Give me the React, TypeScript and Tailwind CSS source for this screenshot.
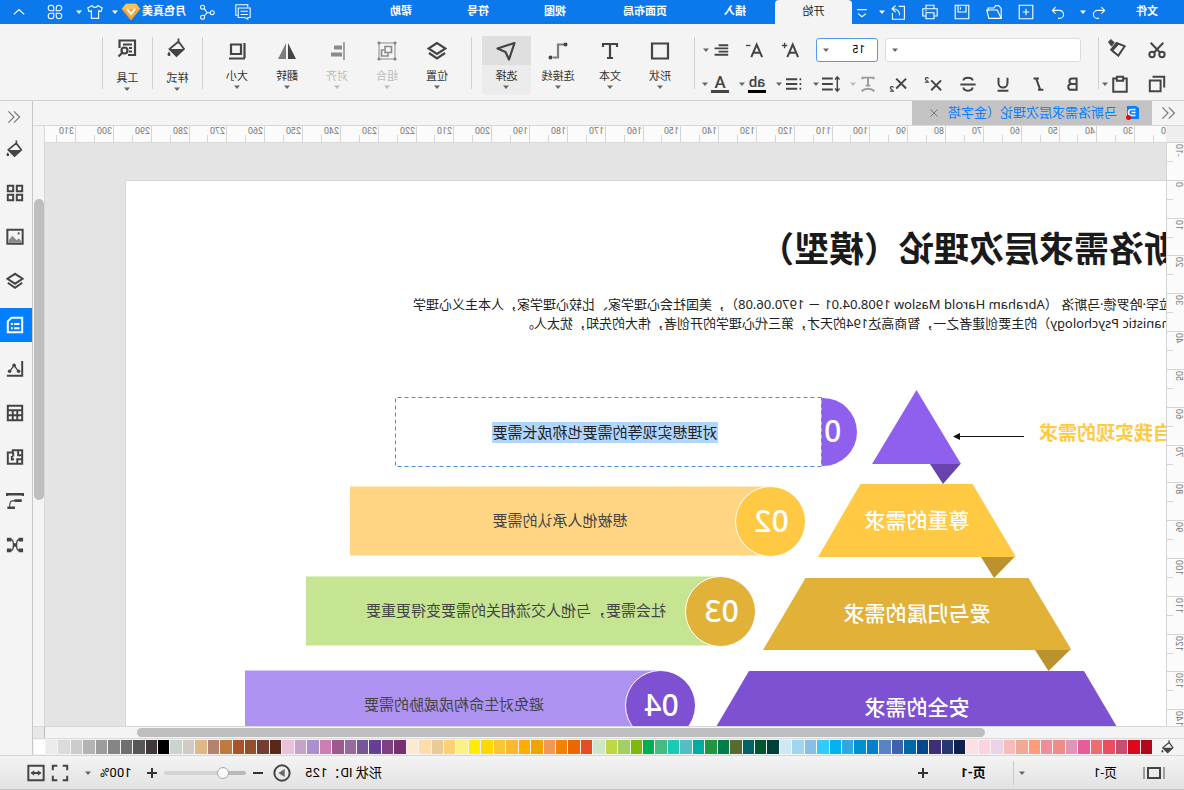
import React from 'react';

type IconProps = { children: React.ReactNode; size?: 'sm' | 'md' | 'lg' };

const ICON_SIZES = { sm: 'w-4 h-4', md: 'w-[18px] h-[18px]', lg: 'w-5 h-5' };
const ICON_STROKES = { sm: 2.4, md: 2.2, lg: 2.2 };

function Icon({ children, size = 'md' }: IconProps) {
  return (
    <svg
      viewBox="0 0 20 20"
      fill="none"
      stroke="currentColor"
      strokeWidth={ICON_STROKES[size]}
      aria-hidden="true"
      className={`${ICON_SIZES[size]} shrink-0`}
    >
      {children}
    </svg>
  );
}

function Caret({ className = 'text-[#666]' }: { className?: string }) {
  return (
    <svg viewBox="0 0 8 8" fill="currentColor" aria-hidden="true" className={`w-2 h-2 shrink-0 ${className}`}>
      <path d="M1 2.500h6L4 6z" />
    </svg>
  );
}

/* ── Shared glyphs ── */

const bucket = (
  <>
    <path d="M8.500 0.500v5M8.500 3.500l9 7.500-7 7L3 11l5.500-7.500" strokeWidth="1.800" />
    <path d="M3 11h14.500l-7 7.500z" fill="currentColor" stroke="none" />
    <path d="M18 13.500c1 1.500 1.500 2.200 1.500 3a1.500 1.500 0 0 1-3 0c0-.8.5-1.500 1.500-3z" fill="currentColor" stroke="none" />
  </>
);

const layers = (
  <>
    <path d="M10 2l8.500 5.500L10 13 1.500 7.500z" />
    <path d="M2 12l8 5.500 8-5.500" />
  </>
);

/* ── Title bar ── */

const menuTabs = [
  { label: '插入', width: 'w-20' },
  { label: '页面布局', width: 'w-[100px]' },
  { label: '视图', width: 'w-20' },
  { label: '符号', width: 'w-[74px]' },
  { label: '帮助', width: 'w-20' },
];

const fileActions = [
  { label: '重做', art: <path d="M13 4l4 4-4 4M17 8H8a5 5 0 0 0 0 10h2" /> },
  { label: '新建', art: <path d="M1.500 1.500h17v17h-17zM10 6v8M6 10h8" /> },
  { label: '打开', art: <path d="M1 18V5.500L4 2h4l2 3h7.500v4M1 18h15.500L19 7.500H6z" /> },
  { label: '保存', art: <path d="M1.500 1.500h17v17h-17zM5 2v8h10V2M12 4v3" /> },
  { label: '打印', art: <path d="M5 6V1.500h10V6M5 15H1V6h18v9h-4M5 11h10v7.500H5zM14 8.500h2" /> },
];

function TitleBar() {
  return (
    <header className="flex h-6 shrink-0 items-center bg-[#0b78ec] text-[11px] text-white">
      <button className="w-[74px] font-bold">文件</button>
      <button aria-label="撤销" className="flex w-[31px] items-center justify-end gap-1">
        <Icon size="sm">
          <path d="M7 4L3 8l4 4M3 8h9a5 5 0 0 1 0 10h-2" strokeWidth="1.400" />
        </Icon>
        <Caret className="text-white" />
      </button>
      <div className="ml-[5px] flex">
        {fileActions.map(a => (
          <button key={a.label} aria-label={a.label} className="flex w-8 justify-center">
            <Icon size="sm">
              <g strokeWidth="1.400">{a.art}</g>
            </Icon>
          </button>
        ))}
      </div>
      <button aria-label="导出" className="flex items-center gap-1 pl-2">
        <Icon size="sm">
          <path d="M9 3H2v16h15v-8M8 14c0-6 3-8 9-8M13 2l4.500 4-4.500 4" strokeWidth="1.400" />
        </Icon>
        <Caret className="text-white" />
      </button>
      <button aria-label="更多" className="ml-[6px] flex w-5 justify-center">
        <Icon size="sm">
          <path d="M4 7h12M5 12l5 4 5-4" strokeWidth="1.400" />
        </Icon>
      </button>
      <nav className="flex h-full">
        <button className="w-[77px] rounded-t-sm bg-[#f4f4f4] text-[#222]">开始</button>
        {menuTabs.map(t => (
          <button key={t.label} className={`${t.width} font-bold`}>{t.label}</button>
        ))}
      </nav>
      <div className="mr-[3px] ml-auto flex items-center">
        <button aria-label="消息" className="mr-3 flex w-6 justify-center">
          <Icon size="sm">
            <path d="M1 5h15v12H8l-4 2v-2H1zM4 4V1h15v13h-2M4 9h9M4 13h9" strokeWidth="1.300" />
          </Icon>
        </button>
        <button aria-label="分享" className="mr-[9px] flex w-6 justify-center">
          <Icon size="sm">
            <g strokeWidth="1.300">
              <circle cx="3.500" cy="11" r="2.500" />
              <circle cx="15.500" cy="4" r="2.500" />
              <circle cx="15.500" cy="16.500" r="2.500" />
              <path d="M6 11h4l3.500-5.500M10 11l3.500 4" />
            </g>
          </Icon>
        </button>
        <button className="flex items-center">
          <span className="font-bold">月色真美</span>
          <svg viewBox="0 0 20 18" aria-hidden="true" className="mr-0.5 ml-px h-[18px] w-5">
            <path d="M5 1h10l4 5-9 11L1 6z" fill="#f5a93b" stroke="#e89a30" />
            <path d="M5 1h10l4 5H1z" fill="#fbc15c" />
            <path d="M6 6l4 5 4-5" fill="none" stroke="#fff" strokeWidth="2" />
          </svg>
          <Caret className="text-white" />
        </button>
        <button aria-label="皮肤" className="ml-2 flex items-center gap-1">
          <Icon size="sm">
            <path d="M6.500 2c1 3 6 3 7 0L19 5l-1.500 4.500-3-1V18h-9V8.500l-3 1L1 5z" strokeWidth="1.400" />
          </Icon>
          <Caret className="text-white" />
        </button>
        <button aria-label="应用" className="ml-2 flex w-6 justify-center">
          <Icon size="sm">
            <path
              d="M8.500 8.500H5A3.500 3.500 0 1 1 8.500 5zM11.500 8.500V5A3.500 3.500 0 1 1 15 8.500zM8.500 11.500V15A3.500 3.500 0 1 1 5 11.500zM11.500 11.500H15a3.500 3.500 0 1 1-3.500 3.500z"
              strokeWidth="1.300"
            />
          </Icon>
        </button>
        <button aria-label="收起" className="ml-2 flex w-8 justify-center">
          <Icon size="sm">
            <path d="M3.500 13L10 7l6.500 6" strokeWidth="1.500" />
          </Icon>
        </button>
      </div>
    </header>
  );
}

/* ── Ribbon ── */

function Divider({ className = '' }: { className?: string }) {
  return <div className={`mt-px h-[52px] w-px shrink-0 bg-[#d0d0d0] ${className}`} />;
}

function DropButton({ label, children, dim = false }: { label: string; children: React.ReactNode; dim?: boolean }) {
  return (
    <button aria-label={label} className={`flex w-[29px] items-center gap-px ${dim ? 'text-[#999]' : ''}`}>
      <span className="flex w-5 justify-center">{children}</span>
      <Caret className={dim ? 'text-[#bbb]' : 'text-[#666]'} />
    </button>
  );
}

type BigProps = { label: string; icon: React.ReactNode; width?: string; dim?: boolean; active?: boolean; low?: boolean };

function BigButton({ label, icon, width = 'w-[50px]', dim, active, low }: BigProps) {
  return (
    <button
      className={`flex h-[59px] shrink-0 flex-col items-center rounded-sm text-[11px] ${width} ${dim ? 'text-[#bbb]' : 'text-[#333]'} ${active ? 'bg-[#ececec]' : ''}`}
    >
      <span
        className={`flex w-full items-center justify-center ${low ? 'h-6' : 'h-[29px]'} ${dim ? 'text-[#8a8a8a]' : 'text-[#444]'} ${active ? 'bg-[#dfdfdf]' : ''}`}
      >
        <Icon size="lg">{icon}</Icon>
      </span>
      <span className={`leading-3 ${low ? 'mt-[13px]' : 'mt-[6px]'}`}>{label}</span>
      <Caret className={dim ? 'text-[#bbb]' : 'text-[#666]'} />
    </button>
  );
}

const formatButtons = [
  { label: '加粗', art: <path d="M6 4h5a3 3 0 0 1 0 6H6zM6 10h6a3 3 0 0 1 0 6.500H6z" /> },
  { label: '倾斜', art: <path d="M9 4h6M4 16.500h6M12 4L7.500 16.500" /> },
  { label: '下划线', art: <path d="M5 3v6a5 5 0 0 0 10 0V3M4 17.500h12" /> },
  { label: '删除线', art: <path d="M15 6c0-4-10-4-10 0M1.500 10.500h17M5 14c0 4.500 10 4.500 10 0" /> },
  {
    label: '上标',
    art: (
      <>
        <path d="M1 6l11 11M12 6L1 17" />
        <path d="M15 4c1-2 4-1 3.500.5 0 1-3.500 2.500-3.500 3.500h4" strokeWidth="1.300" />
      </>
    ),
  },
  {
    label: '下标',
    art: (
      <>
        <path d="M1 4l11 11M12 4L1 15" />
        <path d="M15 14c1-2 4-1 3.500.5 0 1-3.500 2.500-3.500 3.500h4" strokeWidth="1.300" />
      </>
    ),
  },
];

const insertTools = [
  { label: '形状', icon: <path d="M2 2.500h16v15H2z" /> },
  { label: '文本', icon: <path d="M3 6V3h14v3M10 3v14M7 17h6" /> },
];

const arrangeTools = [
  { label: '位置', icon: layers, dim: false },
  {
    label: '组合',
    icon: (
      <>
        <path d="M2 2h16v16H2z" strokeWidth="1" />
        <path d="M1 1h2v2H1zM17 1h2v2h-2zM1 17h2v2H1zM17 17h2v2h-2z" fill="currentColor" strokeWidth="1" />
        <path d="M5.500 5.500h6.500v6H5.500zM13 9h2.500v6H9v-2.500" strokeWidth="1.600" />
      </>
    ),
    dim: true,
  },
  {
    label: '对齐',
    icon: (
      <>
        <path d="M3 1v18" strokeWidth="1.500" />
        <path d="M5 4.500h8v4H5zM5 11.500h11v4H5z" fill="currentColor" stroke="none" />
      </>
    ),
    dim: true,
  },
  {
    label: '翻转',
    icon: (
      <>
        <path d="M9 2v16H1z" fill="currentColor" stroke="none" />
        <path d="M11 2v16h8z" fill="#7d7d7d" stroke="none" />
      </>
    ),
    dim: false,
  },
  { label: '大小', icon: <path d="M6 3.500h10v9.500H6zM2.500 2v15M2 17.500h16" />, dim: false },
];

function Ribbon() {
  return (
    <div className="flex h-[77px] shrink-0 items-start border-b border-[#d0d0d0] bg-[#f4f4f4] pt-3 text-[#444]">
      {/* Clipboard */}
      <div className="mt-px flex w-[85px] shrink-0 flex-col gap-2">
        <div className="flex h-[26px] items-center gap-4 pl-[15px]">
          <button aria-label="剪切" className="flex w-6 justify-center">
            <Icon>
              <circle cx="4.500" cy="15" r="3" />
              <circle cx="15.500" cy="15" r="3" />
              <path d="M3 2l10.500 11M17 2L6.500 13" />
            </Icon>
          </button>
          <button aria-label="格式刷" className="mb-1 flex w-6 justify-center">
            <Icon>
              <path d="M1.500 8l9-3.500 6 7.500-8 6.500z" />
              <path d="M13 4l4-3.500 2.500 3L16 8z" fill="currentColor" strokeWidth="1" />
              <path d="M9 5l7 8" strokeWidth="3" />
            </Icon>
          </button>
        </div>
        <div className="flex h-[26px] items-center gap-[15px] pl-[15px]">
          <button aria-label="复制" className="flex w-6 justify-center">
            <Icon>
              <path d="M2 14V2h13M6 6h12v12H6z" />
            </Icon>
          </button>
          <DropButton label="粘贴">
            <Icon>
              <path d="M6 4H2.500v14.500h15V4H14" />
              <path d="M6.500 2h7v4.500h-7z" />
            </Icon>
          </DropButton>
        </div>
      </div>
      <Divider />

      {/* Font */}
      <div className="mt-px flex w-[403px] shrink-0 flex-col gap-2">
        <div className="flex h-[26px] items-center pl-[17px]">
          <label className="relative flex items-center">
            <select aria-label="字体" className="h-6 w-[196px] appearance-none rounded-[3px] border border-[#dcdcdc] bg-white">
              <option> </option>
            </select>
            <Caret className="absolute right-[6px] text-[#666]" />
          </label>
          <label className="relative ml-[7px] flex items-center">
            <select aria-label="字号" className="h-6 w-[62px] appearance-none rounded-[3px] border border-[#4f9bef] bg-white pl-3 text-[11px] text-black">
              <option>15</option>
            </select>
            <Caret className="absolute right-[6px] text-[#666]" />
          </label>
          <button aria-label="增大字号" className="ml-2 flex w-9 justify-center">
            <Icon>
              <path d="M1 18L7 4l6 14M3 13h8" />
              <path d="M13 5h6M16 2v6" strokeWidth="1.500" />
            </Icon>
          </button>
          <button aria-label="减小字号" className="mr-[5px] flex w-9 justify-center">
            <Icon>
              <path d="M1 18L7 4l6 14M3 13h8" />
              <path d="M14 5h5" strokeWidth="1.500" />
            </Icon>
          </button>
          <DropButton label="对齐方式">
            <Icon size="sm">
              <path d="M1 4h12M1 8h17M1 12h12M1 16h17" />
            </Icon>
          </DropButton>
        </div>
        <div className="flex h-[26px] items-center pl-[7px]">
          {formatButtons.map(b => (
            <button key={b.label} aria-label={b.label} className="flex w-[35px] justify-center">
              <Icon>{b.art}</Icon>
            </button>
          ))}
          <div className="flex gap-2 pl-[3px]">
            <DropButton label="文字效果" dim>
              <Icon size="sm">
                <path d="M3 4V2h14v2M10 2v10M7 12h6M2 19c4-4 12-4 16 0" />
              </Icon>
            </DropButton>
            <DropButton label="行距">
              <Icon>
                <path d="M8 4h12M8 10h12M8 16h12" />
                <path d="M3 2v16M.5 5L3 2l2.500 3M.5 15L3 18l2.500-3" strokeWidth="1.600" />
              </Icon>
            </DropButton>
            <DropButton label="项目符号">
              <Icon size="sm">
                <path d="M6 4h14M6 10h14M6 16h14" />
                <path d="M1 4h2M1 10h2M1 16h2" />
              </Icon>
            </DropButton>
            <DropButton label="突出显示">
              <span className="block w-[18px] border-b-[3px] border-black text-center text-[15px] leading-[15px] font-medium">ab</span>
            </DropButton>
            <DropButton label="字体颜色">
              <span className="block w-[18px] border-b-[3px] border-[#444] text-center text-[17px] leading-[15px] font-medium">A</span>
            </DropButton>
          </div>
        </div>
      </div>
      <Divider className="mr-[9px]" />

      {insertTools.map(t => (
        <BigButton key={t.label} label={t.label} icon={t.icon} />
      ))}
      <BigButton
        label="连接线"
        width="w-[54px]"
        icon={
          <>
            <path d="M3 3.500h7v13h5" stroke="#7d7d7d" />
            <circle cx="2.500" cy="3.500" r="2" fill="currentColor" stroke="none" />
            <circle cx="17.500" cy="16.500" r="2" fill="currentColor" stroke="none" />
          </>
        }
      />
      <BigButton label="选择" width="w-[49px]" active icon={<path d="M1.500 2l17 5.500-8 3.500-3.500 7.500z" strokeLinejoin="round" />} />
      <Divider className="mr-[9px] ml-[10px]" />

      {arrangeTools.map(t => (
        <BigButton key={t.label} label={t.label} icon={t.icon} dim={t.dim} />
      ))}
      <Divider className="ml-[9px]" />
      <BigButton label="样式" width="w-[49px]" low icon={bucket} />
      <Divider />
      <BigButton
        label="工具"
        width="w-[49px]"
        low
        icon={
          <>
            <path d="M9 17H2V2.500h15.500V10M5 6.500h9M5 10h3M5 13.500h3" />
            <circle cx="12.500" cy="12.500" r="3" />
            <path d="M14.500 14.500l4 4" />
          </>
        }
      />
      <Divider />
    </div>
  );
}

/* ── Document tab ── */

function DocumentTabs() {
  return (
    <div className="flex h-[25px] shrink-0 border-b border-[#d8d8d8] bg-[#f4f4f4]">
      <button aria-label="展开" className="flex w-8 items-center justify-center text-[#777]">
        <Icon size="sm">
          <path d="M9 3l-7 7 7 7M17 3l-7 7 7 7" strokeWidth="1.500" />
        </Icon>
      </button>
      <div className="flex w-60 items-center bg-[#c3c3c3]">
        <svg viewBox="0 0 14 16" aria-hidden="true" className="ml-3 h-4 w-[14px]">
          <path d="M1 3l3-2h9v13H1z" fill="#0a80ff" />
          <path d="M4.500 4.500h4a3 3 0 0 1 0 6h-4M4.500 7.500h4" fill="none" stroke="#fff" strokeWidth="1.500" />
          <circle cx="11.500" cy="12.500" r="2.500" fill="#f00" />
        </svg>
        <a href="#doc" className="ml-[9px] text-[13px] whitespace-nowrap text-[#0a7cff]">马斯洛需求层次理论（金字塔</a>
        <button aria-label="关闭" className="mr-[18px] ml-auto text-[#777]">
          <svg viewBox="0 0 8 8" fill="none" stroke="currentColor" className="h-2 w-2">
            <path d="M.5.5l7 7M7.500.5l-7 7" />
          </svg>
        </button>
      </div>
    </div>
  );
}

/* ── Rulers ── */

const STEP = 37.82;
const topMarks = Array.from({ length: 29 }, (_, i) => ({ value: 30 + i * 10, at: Math.round((i + 1) * STEP) - 7 }));
const sideMarks = Array.from({ length: 16 }, (_, i) => ({ value: i * 10 - 10, at: Math.round(i * STEP) }));

function TopRuler() {
  return (
    <svg className="block h-4 w-full bg-[#fbfbfb]" fill="#777" fontSize="9" aria-hidden="true">
      <path d="M12.500 9v7" stroke="#d4d4d4" />
      <text x="0" y="8">0</text>
      {topMarks.map(m => (
        <g key={m.value}>
          <path d={`M${m.at + 0.5} 0v16M${m.at + 19.5} 9v7`} stroke="#d4d4d4" />
          <text x={m.at + 2} y="8">{m.value}</text>
        </g>
      ))}
    </svg>
  );
}

function SideRuler() {
  return (
    <svg
      className="block w-[18px] flex-1 border-r border-[#d4d4d4] bg-[#fbfbfb]"
      fill="#777"
      fontSize="9"
      textAnchor="end"
      aria-hidden="true"
    >
      {sideMarks.map(m => (
        <g key={m.value}>
          <path d={`M0 ${m.at + 0.5}h18M11 ${m.at + 19.5}h7`} stroke="#d4d4d4" />
          <text transform={`translate(8 ${m.at + 2}) rotate(-90)`}>{m.value}</text>
        </g>
      ))}
    </svg>
  );
}

/* ── Diagram ── */

const levels = [
  { no: '02', cx: 413.5, cy: 521, color: '#ffc943', bar: '#ffd584', barEnd: 834, text: '想被他人承认的需要', tx: 624 },
  { no: '03', cx: 463.5, cy: 611, color: '#e1b138', bar: '#c5e592', barEnd: 878, text: '社会需要，与他人交流相关的需要变得更重要', tx: 668 },
  { no: '04', cx: 523.5, cy: 705, color: '#7d51d1', bar: '#ad92f1', barEnd: 939, text: '避免对生命构成威胁的需要', tx: 730 },
];

const tiers = [
  { points: '267.5,390 312,464 223,464', color: '#8f5fee', fold: '223.500,464 254,464 241,484', foldColor: '#6943ad', text: '', ty: 0 },
  { points: '211.5,484 323.5,484 366,557 168,557', color: '#ffc943', fold: '169.500,557 203,557 190,578', foldColor: '#bb922d', text: '尊重的需求', ty: 528 },
  { points: '155.5,578 378.5,578 421,650 112.5,650', color: '#e1b138', fold: '114,650 149,650 135.5,671', foldColor: '#bb922d', text: '爱与归属的需求', ty: 621 },
  { points: '100,671 435,671 478,744 57,744', color: '#7d51d1', fold: '', foldColor: '', text: '安全的需求', ty: 715 },
];

function Diagram() {
  return (
    <svg viewBox="18 142 1041 600" className="absolute top-0 left-0 h-[600px] w-[1041px]">
      {/* Pyramid */}
      {tiers.map(t => (
        <g key={t.points}>
          <polygon points={t.points} fill={t.color} />
          {t.fold && <polygon points={t.fold} fill={t.foldColor} />}
          {t.text && <text x="267" y={t.ty} textAnchor="middle" fontSize="21" fontWeight="500" fill="#fff">{t.text}</text>}
        </g>
      ))}
      <text x="12" y="440" fontSize="19" fontWeight="700" fill="#ffc943">自我实现的需求</text>
      <path d="M160 436.500h66" stroke="#111" />
      <path d="M231 436.500l-7-3.500v7z" fill="#111" />

      {/* Selected level */}
      <circle cx="361" cy="432" r="34" fill="#8f5fee" />
      <text x="360" y="442" textAnchor="middle" fontSize="30" fontWeight="500" fill="#fff">01</text>
      <rect x="362.500" y="397.500" width="426" height="69" fill="#fff" stroke="#4b8fdc" strokeDasharray="4 3" />
      <rect x="466" y="422" width="226" height="21" fill="#b0d5ff" />
      <text x="579" y="438" textAnchor="middle" fontSize="15" fill="#222">对理想实现等的需要也称成长需要</text>

      {levels.map(l => (
        <g key={l.no}>
          <rect x={l.cx} y={l.cy - 34.5} width={l.barEnd - l.cx} height="69" fill={l.bar} />
          <circle cx={l.cx} cy={l.cy + 0.5} r="35" fill={l.color} stroke="#fff" />
          <text x={l.cx - 1} y={l.cy + 11} textAnchor="middle" fontSize="30" fontWeight="500" fill="#fff">{l.no}</text>
          <text x={l.tx} y={l.cy + 5} textAnchor="middle" fontSize="15" fill="#444">{l.text}</text>
        </g>
      ))}
    </svg>
  );
}

function Canvas() {
  return (
    <main className="relative flex-1 overflow-hidden bg-[#e4e4e4] font-['Noto_Sans','Noto_Sans_CJK_SC',sans-serif] shadow-[inset_0_1px_0_#d8d8d8] [text-spacing-trim:space-all]">
      {/* Sheet */}
      <div className="absolute top-[38px] bottom-0 left-0 w-[1041px] border-t border-r border-[#d8d8d8] bg-white" />
      <h1 className="absolute top-[82px] -left-12 text-[35px] leading-[50px] font-bold whitespace-nowrap text-[#1a1a1a]">
        马斯洛需求层次理论（模型）
      </h1>
      <p className="absolute top-[152px] left-0 flex w-[753px] justify-end text-[13px] leading-5 whitespace-nowrap text-[#222]">
        亚伯拉罕·哈罗德·马斯洛 （Abraham Harold Maslow 1908.04.01 － 1970.06.08），美国社会心理学家、比较心理学家，人本主义心理学
      </p>
      <p className="absolute top-[171px] left-0 flex w-[645px] justify-end text-[13px] leading-5 whitespace-nowrap text-[#222]">
        （Humanistic Psychology）的主要创建者之一，智商高达194的天才，第三代心理学的开创者，伟大的先知，犹太人。
      </p>
      <Diagram />
    </main>
  );
}

/* ── Palette ── */

const palette = [
  '#b20718', '#d90a1c', '#c84d73', '#e94f62', '#ed6c72', '#e95c9b', '#e095b5', '#ee8c86', '#ef8d98', '#ff9c78',
  '#f0aa94', '#f5bdba', '#e8d3e7', '#fdd2e3', '#fde0e3', '#0f204f', '#25386f', '#3f2e78', '#06468b', '#0068a3',
  '#4062ad', '#5583c4', '#0080cd', '#008fcf', '#2ea9df', '#00b3f0', '#33caff', '#88bfe9', '#9dd6ee', '#cce9f5',
  '#00403a', '#00562f', '#006464', '#556b2f', '#007d4a', '#1f9640', '#00ada0', '#54bec4', '#1ccab4', '#46ba80',
  '#00b050', '#7fb80e', '#a4d063', '#bed742', '#cde6c7', '#e34f20', '#ea6800', '#f08300', '#f19757', '#f0a400',
  '#ffae00', '#fdb733', '#f9c831', '#ffd800', '#ffec00', '#fcf283', '#fdd173', '#e8cb96', '#ffdcaa', '#fde8d0',
  '#783072', '#7f3f84', '#663f96', '#765599', '#966a9f', '#9b598d', '#cc7eb1', '#a991d0', '#c6a3c8', '#ebc0da',
  '#5a281b', '#763c31', '#924f2a', '#a95426', '#bf7a40', '#b2846d', '#dfb885', '#d4cac5', '#c9d4cc', '#000000',
  '#403839', '#585656', '#706f6f', '#858585', '#9b9d9c', '#b2b4b3', '#cbcdcc', '#dbdbdb', '#ebebeb', '#ffffff',
];

function Palette() {
  return (
    <div className="flex h-[17px] shrink-0 items-center border-t border-[#dadada] bg-[#f4f4f4]">
      <button aria-label="填充颜色" className="flex w-8 justify-center text-[#444]">
        <svg viewBox="0 0 20 20" fill="none" stroke="currentColor" className="h-[14px] w-[14px]">{bucket}</svg>
      </button>
      <div className="flex h-[14px] flex-1 gap-px">
        {palette.map(c => (
          <button key={c} aria-label={c} className="flex-1" style={{ backgroundColor: c }} />
        ))}
      </div>
    </div>
  );
}

/* ── Side panel ── */

const panels = [
  { label: '填充', art: bucket },
  { label: '符号库', art: <path d="M2 2h6v6H2zM12 2h6v6h-6zM2 12h6v6H2zM12 12h6v6h-6z" /> },
  {
    label: '图片',
    art: (
      <>
        <path d="M1.500 2h17v15.500h-17z" />
        <path d="M3 16.500v-2l3-3 2 2 5-5 4 5v3z" fill="#8a8a8a" stroke="none" />
        <path d="M5 6h2" />
      </>
    ),
  },
  { label: '图层', art: layers },
  { label: '页面', art: <path d="M2 2h12l4 4v12H2zM5 9h6M12.500 9h2M5 13.500h6M12.500 13.500h2" />, active: true },
  {
    label: '图表',
    art: (
      <>
        <path d="M2 1v16.500h17" />
        <path d="M6 13l5-7 5 7" strokeWidth="1.500" />
        <g fill="currentColor" stroke="none">
          <circle cx="6" cy="12.500" r="2" />
          <circle cx="11" cy="6" r="2" />
          <circle cx="16" cy="12.500" r="2" />
        </g>
      </>
    ),
  },
  { label: '表格', art: <path d="M2 2h16v16H2zM2 7h16M2 12.500h16M7.500 7v11M12.500 7v11" /> },
  { label: '平面图', art: <path d="M2 2.500h10.500V5H18v12.500H2zM2 8h4.500V2.500M2 12.500h5.500v5M12 5v4.500M11 12.500h3.500M13.500 9v5" /> },
  {
    label: '甘特图',
    art: (
      <>
        <path d="M1 4.500V2.500h18v2" strokeWidth="3" />
        <path d="M2.500 9.500h8M10 17.500h8.500" strokeWidth="3" />
        <path d="M10 9.500c5 0 6 1 6 7" strokeWidth="1.300" />
      </>
    ),
  },
  {
    label: '思维导图',
    art: (
      <>
        <path d="M3 4h3c3 0 1 6 4 6s1-6 4-6h3M3 16h3c3 0 1-6 4-6s1 6 4 6h3" strokeWidth="1.400" />
        <path d="M1 4h5M14 4h5M1 16h5M14 16h5M7.500 10h5" strokeWidth="4" />
      </>
    ),
  },
];

function SidePanel() {
  return (
    <aside className="flex w-[33px] shrink-0 flex-col border-l border-[#c8c8c8] bg-[#f4f4f4] text-[#444]">
      <button aria-label="展开面板" className="flex h-[31px] items-center justify-center pl-1 text-[#777]">
        <Icon size="sm">
          <path d="M10 3l-7 7 7 7M17 3l-7 7 7 7" strokeWidth="1.500" />
        </Icon>
      </button>
      <div className="flex flex-col gap-[10px]">
        {panels.map(p => (
          <button
            key={p.label}
            aria-label={p.label}
            className={`flex h-[34px] items-center justify-center pl-0.5 ${p.active ? 'bg-[#0080ff] text-white' : ''}`}
          >
            <Icon>{p.art}</Icon>
          </button>
        ))}
      </div>
    </aside>
  );
}

/* ── Status bar ── */

function StatusBar() {
  return (
    <footer className="flex h-[35px] shrink-0 items-center border-t border-b border-t-[#d6d6d6] border-b-[#c6c6c6] bg-gradient-to-b from-[#f4f4f4] to-[#e2e2e2] text-[13px] text-black">
      <button aria-label="演示" className="ml-[18px] text-[#444]">
        <svg viewBox="0 0 24 16" fill="none" stroke="currentColor" strokeWidth="2" className="h-4 w-6">
          <path d="M6 3h12v10H6z" />
          <path d="M2 2v12M22 2v12" stroke="#888" strokeWidth="1.500" />
        </svg>
      </button>
      <button className="ml-[25px] flex w-[99px] items-center justify-between">
        <span>页-1</span>
        <Caret />
      </button>
      <div className="ml-1 h-6 w-px bg-[#c8c8c8]" />
      <button className="w-20 font-bold">页-1</button>
      <button aria-label="添加页面" className="flex w-5 justify-center text-[#333]">
        <svg viewBox="0 0 10 10" stroke="currentColor" strokeWidth="2" className="h-[10px] w-[10px]">
          <path d="M5 0v10M0 5h10" />
        </svg>
      </button>

      <div className="mr-[27px] ml-auto flex items-center">
        <span className="whitespace-nowrap">形状 ID：125</span>
        <button aria-label="播放" className="ml-[14px] text-[#444]">
          <Icon>
            <circle cx="10" cy="10" r="8.500" />
            <path d="M7 5.500l7 4.500-7 4.500z" fill="#666" stroke="none" />
          </Icon>
        </button>
        <button aria-label="缩小" className="ml-[10px] h-0.5 w-[10px] bg-[#333]" />
        <input
          type="range"
          aria-label="缩放"
          min="0"
          max="100"
          defaultValue="25"
          className="mx-[7px] h-1 w-[82px] appearance-none rounded-full bg-gradient-to-r from-[#b8b8b8] from-25% to-[#d4d4d4] to-25% [&::-webkit-slider-thumb]:h-3 [&::-webkit-slider-thumb]:w-3 [&::-webkit-slider-thumb]:appearance-none [&::-webkit-slider-thumb]:rounded-full [&::-webkit-slider-thumb]:border [&::-webkit-slider-thumb]:border-[#aaa] [&::-webkit-slider-thumb]:bg-[#fafafa]"
        />
        <button aria-label="放大" className="text-[#333]">
          <svg viewBox="0 0 10 10" stroke="currentColor" strokeWidth="2" className="h-[10px] w-[10px]">
            <path d="M5 0v10M0 5h10" />
          </svg>
        </button>
        <button className="ml-4 flex items-center gap-2">
          <span>100%</span>
          <Caret />
        </button>
        <button aria-label="全屏" className="ml-[15px] text-[#444]">
          <Icon>
            <path d="M2 7V2h5M13 2h5v5M18 13v5h-5M7 18H2v-5" />
          </Icon>
        </button>
        <button aria-label="适合宽度" className="ml-[6px] text-[#444]">
          <Icon>
            <path d="M1.500 2h17v16h-17zM5 10h10" />
            <path d="M4 10l4-3v6zM16 10l-4-3v6z" fill="currentColor" stroke="none" />
          </Icon>
        </button>
      </div>
    </footer>
  );
}

export default function App() {
  return (
    <div className="flex h-screen -scale-x-100 flex-col overflow-hidden bg-[#f4f4f4] font-['Roboto','Noto_Sans_CJK_SC',sans-serif]">
      <TitleBar />
      <Ribbon />
      <div className="flex min-h-0 flex-1">
        <div className="flex min-w-0 flex-1 flex-col">
          <DocumentTabs />
          <div className="flex min-h-0 flex-1">
            <div className="flex w-[18px] shrink-0 flex-col">
              <div className="h-4 shrink-0 bg-[#eee]" />
              <SideRuler />
            </div>
            <div className="flex min-w-0 flex-1 flex-col">
              <TopRuler />
              <Canvas />
            </div>
            {/* Vertical scrollbar */}
            <div className="w-3 shrink-0 border-l border-[#d8d8d8] pt-[73px]">
              <div className="h-[301px] w-[10px] rounded-full bg-[#bebebe]" />
            </div>
          </div>
          {/* Horizontal scrollbar */}
          <div className="flex h-3 shrink-0 items-center border-t border-[#d8d8d8] pl-[199px]">
            <div className="h-[9px] w-[848px] rounded-full bg-[#bebebe]" />
            <div className="ml-auto h-full w-3 border-l border-[#bbb] bg-[#e8e8e8]" />
          </div>
          <Palette />
        </div>
        <SidePanel />
      </div>
      <StatusBar />
    </div>
  );
}
